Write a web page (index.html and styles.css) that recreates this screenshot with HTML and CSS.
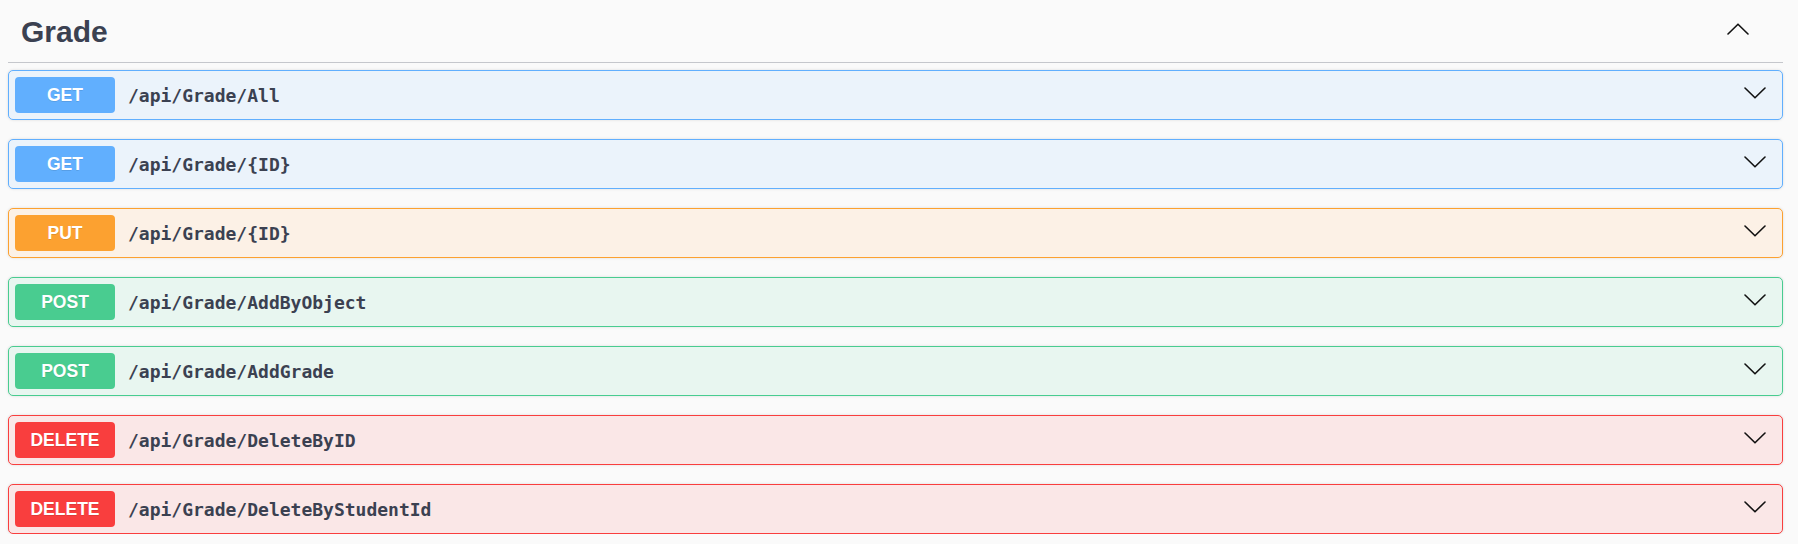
FILE: index.html
```html
<!DOCTYPE html>
<html lang="en">
<head>
<meta charset="utf-8">
<title>Grade</title>
<link rel="stylesheet" href="styles.css">
</head>
<body>
<div class="wrapper">
  <div class="tag">
    <h3 class="tag-title">Grade</h3>
    <svg class="arrow-up" width="22" height="12" viewBox="0 0 22 12"><polyline points="1,11 11,1.2 21,11" fill="none" stroke="#111" stroke-width="1.6" stroke-linecap="round" stroke-linejoin="round"/></svg>
  </div>
  <div class="ops">
    <div class="op get">
      <span class="method">GET</span>
      <span class="path">/api/Grade/All</span>
      <svg class="arrow" width="22" height="12" viewBox="0 0 22 12"><polyline points="1,1 11,10.8 21,1" fill="none" stroke="#111" stroke-width="1.6" stroke-linecap="round" stroke-linejoin="round"/></svg>
    </div>
    <div class="op get">
      <span class="method">GET</span>
      <span class="path">/api/Grade/{ID}</span>
      <svg class="arrow" width="22" height="12" viewBox="0 0 22 12"><polyline points="1,1 11,10.8 21,1" fill="none" stroke="#111" stroke-width="1.6" stroke-linecap="round" stroke-linejoin="round"/></svg>
    </div>
    <div class="op put">
      <span class="method">PUT</span>
      <span class="path">/api/Grade/{ID}</span>
      <svg class="arrow" width="22" height="12" viewBox="0 0 22 12"><polyline points="1,1 11,10.8 21,1" fill="none" stroke="#111" stroke-width="1.6" stroke-linecap="round" stroke-linejoin="round"/></svg>
    </div>
    <div class="op post">
      <span class="method">POST</span>
      <span class="path">/api/Grade/AddByObject</span>
      <svg class="arrow" width="22" height="12" viewBox="0 0 22 12"><polyline points="1,1 11,10.8 21,1" fill="none" stroke="#111" stroke-width="1.6" stroke-linecap="round" stroke-linejoin="round"/></svg>
    </div>
    <div class="op post">
      <span class="method">POST</span>
      <span class="path">/api/Grade/AddGrade</span>
      <svg class="arrow" width="22" height="12" viewBox="0 0 22 12"><polyline points="1,1 11,10.8 21,1" fill="none" stroke="#111" stroke-width="1.6" stroke-linecap="round" stroke-linejoin="round"/></svg>
    </div>
    <div class="op delete">
      <span class="method">DELETE</span>
      <span class="path">/api/Grade/DeleteByID</span>
      <svg class="arrow" width="22" height="12" viewBox="0 0 22 12"><polyline points="1,1 11,10.8 21,1" fill="none" stroke="#111" stroke-width="1.6" stroke-linecap="round" stroke-linejoin="round"/></svg>
    </div>
    <div class="op delete">
      <span class="method">DELETE</span>
      <span class="path">/api/Grade/DeleteByStudentId</span>
      <svg class="arrow" width="22" height="12" viewBox="0 0 22 12"><polyline points="1,1 11,10.8 21,1" fill="none" stroke="#111" stroke-width="1.6" stroke-linecap="round" stroke-linejoin="round"/></svg>
    </div>
  </div>
</div>
</body>
</html>
```
FILE: styles.css
```css
html, body {
  margin: 0;
  padding: 0;
  background: #fafafa;
}
body {
  font-family: "Liberation Sans", Arial, sans-serif;
  color: #3b4151;
}
.wrapper {
  padding: 0 15px 0 8px;
}
.tag {
  display: flex;
  align-items: center;
  height: 62px;
  border-bottom: 1px solid #c5c7cc;
  padding: 0 34px 0 13px;
}
.tag-title {
  flex: 1;
  margin: 0;
  font-size: 30px;
  font-weight: 700;
  color: #3b4151;
  line-height: 1;
  margin-top: 1px;
}
.arrow-up {
  margin-bottom: 4px;
}
.ops {
  display: flex;
  flex-direction: column;
  gap: 19px;
  padding-top: 7px;
}
.op {
  display: flex;
  align-items: center;
  height: 50px;
  box-sizing: border-box;
  padding: 0 16px 0 6px;
  border: 1px solid;
  border-radius: 5px;
  box-shadow: 0 0 3px rgba(0, 0, 0, 0.12);
}
.method {
  width: 100px;
  height: 36px;
  border-radius: 4px;
  display: flex;
  align-items: center;
  justify-content: center;
  color: #fff;
  font-size: 17.5px;
  font-weight: 700;
  text-shadow: 0 1px 0 rgba(0, 0, 0, 0.1);
  flex-shrink: 0;
}
.path {
  flex: 1;
  padding-left: 13px;
  font-family: "DejaVu Sans Mono", "Liberation Mono", monospace;
  font-weight: 700;
  font-size: 18px;
  color: #3b4151;
}
.arrow {
  margin-bottom: 4px;
}
.get { background: #ebf3fb; border-color: #61affe; }
.get .method { background: #61affe; }
.put { background: #fcf1e6; border-color: #fca130; }
.put .method { background: #fca130; }
.post { background: #e8f6f0; border-color: #49cc90; }
.post .method { background: #49cc90; }
.delete { background: #fae7e7; border-color: #f93e3e; }
.delete .method { background: #f93e3e; }
```
